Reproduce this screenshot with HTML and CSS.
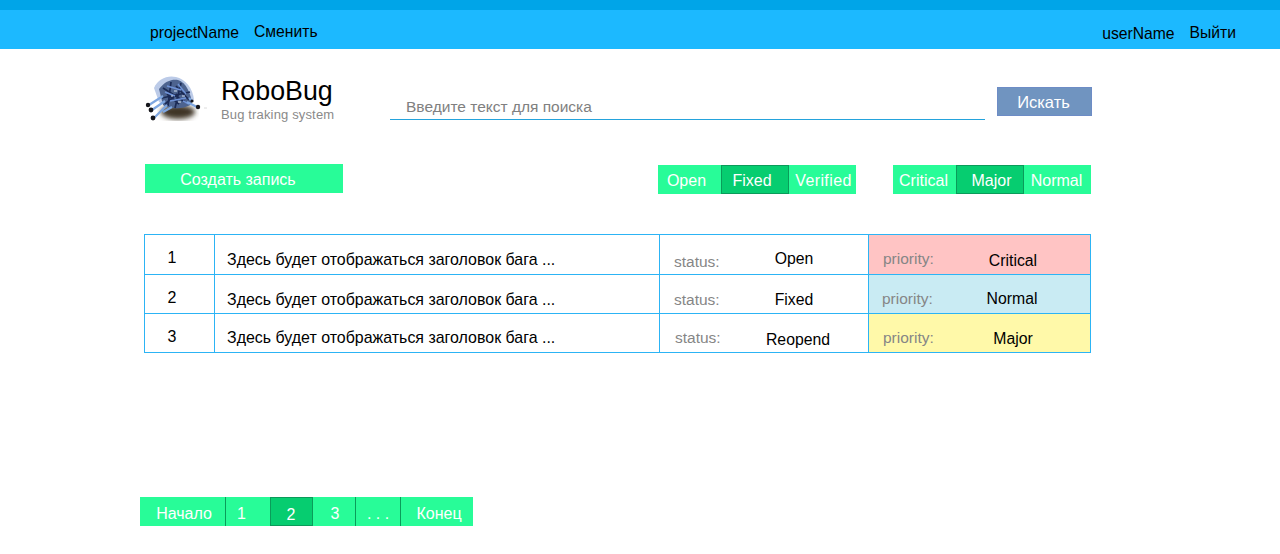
FILE: index.html
```html
<!DOCTYPE html>
<html lang="ru">
<head>
<meta charset="utf-8">
<title>RoboBug</title>
<link rel="stylesheet" href="styles.css">
</head>
<body>
<header class="topbar">
  <div class="topbar-left"><a class="name">projectName</a><a class="link">Сменить</a></div>
  <div class="topbar-right"><a class="name">userName</a><a class="link">Выйти</a></div>
</header>

<section class="masthead">
  <svg class="logo" width="66" height="52" viewBox="0 0 66 52" aria-hidden="true">
    <defs>
      <filter id="soft"><feGaussianBlur stdDeviation="0.5"/></filter>
      <filter id="shade"><feGaussianBlur stdDeviation="2.6"/></filter>
    </defs>
    <ellipse cx="33" cy="38" rx="17" ry="7" fill="#3f3627" filter="url(#shade)"/>
    <g filter="url(#soft)">
      <path d="M9 14 C13 5 22 1 31 3 C40 5 48 14 49 26 C44 32 20 32 14 28 Z" fill="#bccbe8"/>
      <path d="M14 15 C20 7 27 5 33 6 C41 8 46 20 47 30 C40 35 24 36 18 31 Z" fill="#4d648f"/>
      <path d="M18 14 L40 28 M26 8 L23 32 M36 9 L30 34 M17 24 L45 18 M22 20 L34 30 M31 12 L44 26 M20 30 L32 20" stroke="#1b2a55" stroke-width="1.7" fill="none"/>
      <path d="M22 12 L36 16 M25 27 L41 24 M33 10 L41 20 M20 18 L30 22 M38 27 L44 30" stroke="#6f93d8" stroke-width="1.4" fill="none"/>
      <path d="M29 17 h3 M37 22 h3 M26 22 h2 M33 28 h3" stroke="#d7e2f2" stroke-width="1" fill="none"/>
      <path d="M18 22 L4 31 M20 27 L7 36 M22 31 L9 44 M27 33 L18 38 M42 28 L52 33 M44 24 L47 27" stroke="#7ea6e0" stroke-width="2.2" fill="none"/>
    </g>
    <circle cx="3" cy="31" r="2.2" fill="#15151a"/>
    <circle cx="6" cy="36" r="2.4" fill="#15151a"/>
    <circle cx="8" cy="44" r="2.4" fill="#15151a"/>
    <circle cx="47" cy="27" r="1.6" fill="#15151a"/>
    <circle cx="53" cy="33" r="2.2" fill="#15151a"/>
    <path d="M59 34 h3" stroke="#dcdcdc" stroke-width="1"/>
  </svg>
  <div class="brand">
    <div class="brand-name">RoboBug</div>
    <div class="brand-sub">Bug traking system</div>
  </div>
  <input class="search" type="text" placeholder="Введите текст для поиска">
  <button class="search-btn" type="button">Искать</button>
</section>

<section class="toolbar">
  <a class="create">Создать запись</a>
  <div class="seg seg-status">
    <a class="seg-open">Open</a><a class="seg-fixed is-active">Fixed</a><a class="seg-verified">Verified</a>
  </div>
  <div class="seg seg-priority">
    <a class="seg-critical">Critical</a><a class="seg-major is-active">Major</a><a class="seg-normal">Normal</a>
  </div>
</section>

<section class="bugs">
  <div class="bug bug-1">
    <div class="cell num"><span class="p14">1</span></div>
    <div class="cell title"><span class="p16">Здесь будет отображаться заголовок бага ...</span></div>
    <div class="cell status"><span class="label p18">status:</span><span class="value p15">Open</span></div>
    <div class="cell priority critical"><span class="label p15">priority:</span><span class="value p17">Critical</span></div>
  </div>
  <div class="bug bug-2">
    <div class="cell num"><span class="p14">2</span></div>
    <div class="cell title"><span class="p16">Здесь будет отображаться заголовок бага ...</span></div>
    <div class="cell status"><span class="label p16">status:</span><span class="value p16">Fixed</span></div>
    <div class="cell priority normal"><span class="label p15 nudge-left">priority:</span><span class="value p15 shift-left">Normal</span></div>
  </div>
  <div class="bug bug-3">
    <div class="cell num"><span class="p14">3</span></div>
    <div class="cell title"><span class="p15">Здесь будет отображаться заголовок бага ...</span></div>
    <div class="cell status"><span class="label p15 nudge-right">status:</span><span class="value p17 wide">Reopend</span></div>
    <div class="cell priority major"><span class="label p15">priority:</span><span class="value p16">Major</span></div>
  </div>
</section>

<nav class="pager">
  <a class="pg-first">Начало</a><a class="pg-1">1</a><a class="pg-2 is-active">2</a><a class="pg-3">3</a><a class="pg-more">. . .</a><a class="pg-last">Конец</a>
</nav>
</body>
</html>
```
FILE: styles.css
```css
* { box-sizing: border-box; }
html, body { margin: 0; padding: 0; }
body {
  width: 1280px;
  height: 554px;
  overflow: hidden;
  background: #fff;
  color: #000;
  font: 16px/18px "Liberation Sans", Arial, sans-serif;
}

/* top bar */
.topbar {
  height: 49px;
  padding: 10px 44px 0 150px;
  background: linear-gradient(#00a5e8 10px, #1cb9ff 10px);
  display: flex;
  justify-content: space-between;
  font-size: 15.7px;
}
.topbar-left, .topbar-right { display: flex; }
.topbar .name { padding-top: 14px; margin-right: 15px; }
.topbar .link { padding-top: 13px; }
.topbar-right .name { padding-top: 15px; }
.topbar-right .link { padding-top: 14px; }

/* logo and search */
.masthead {
  height: 115px;
  padding: 25px 0 0 145px;
  display: flex;
  align-items: flex-start;
}
.logo { flex: none; margin-right: 10px; }
.brand { width: 169px; padding-top: 2px; }
.brand-name { font-size: 26.8px; line-height: 30px; }
.brand-sub { font-size: 13px; line-height: 14px; margin-top: 2px; letter-spacing: .15px; color: #8a8a8a; }
.search {
  width: 595px;
  height: 28px;
  margin: 18px 12px 0 0;
  padding: 2px 16px 0;
  border: 0;
  border-bottom: 1px solid #24a3dc;
  outline: 0;
  background: transparent;
  font: 15.5px/18px "Liberation Sans", Arial, sans-serif;
}
.search::placeholder { color: #808080; opacity: 1; }
.search-btn {
  width: 95px;
  height: 29px;
  margin-top: 13px;
  padding: 0 2px 0 0;
  border: 1px solid #6d8cc6;
  background: #7094c0;
  color: #fff;
  font: 16.5px/18px "Liberation Sans", Arial, sans-serif;
}

/* filters */
.toolbar { height: 70px; padding-left: 145px; display: flex; align-items: flex-start; color: #fff; }
.toolbar a { color: #fff; }
.create {
  width: 198px;
  height: 29px;
  padding-right: 12px;
  background: #28fc98;
  text-align: center;
  line-height: 31px;
  margin-right: 315px;
}
.seg { display: flex; height: 29px; margin-top: 1px; background: #28fc98; }
.seg-status { width: 198px; margin-right: 37px; }
.seg-priority { width: 198px; }
.seg a { line-height: 31px; text-align: center; }
.is-active { background: #06cd70; border: 1px solid #0a9c5a; }
.seg .is-active { line-height: 29px; }
.seg-open { width: 63px; padding-right: 6px; }
.seg-fixed { width: 68px; padding-right: 6px; }
.seg-verified { width: 67px; padding-left: 2px; letter-spacing: .4px; }
.seg-critical { width: 63px; padding-right: 2px; }
.seg-major { width: 68px; padding-left: 3px; }
.seg-normal { width: 67px; padding-right: 2px; }

/* bug list */
.bugs {
  width: 947px;
  height: 119px;
  margin-left: 144px;
  border: 1px solid #2cb4f5;
  border-bottom: 0;
}
.bug {
  display: grid;
  grid-template-columns: 70px 445px 209px 221px;
  height: 39px;
  border-bottom: 1px solid #2cb4f5;
}
.bug-1 { height: 40px; }
.cell { display: flex; align-items: flex-start; border-right: 1px solid #2cb4f5; }
.cell:last-child { border-right: 0; }
.num { justify-content: center; padding-right: 15px; }
.title { padding-left: 12px; font-size: 15.96px; }
.label { width: 60px; font-size: 15.5px; color: #868686; }
.value { text-align: center; font-size: 15.8px; }
.status { padding-left: 14px; }
.status .value { width: 120px; }
.status .value.wide { width: 126px; }
.priority { padding-left: 14px; }
.priority .value { width: 140px; }
.priority .value.shift-left { width: 138px; }
.nudge-left { margin-left: -1px; margin-right: 1px; }
.nudge-right { margin-left: 1px; }
.critical { background: #ffc4c4; }
.normal { background: #c9ebf3; }
.major { background: #fff9a9; }
.p14 { padding-top: 14px; }
.p15 { padding-top: 15px; }
.p16 { padding-top: 16px; }
.p17 { padding-top: 17px; }
.p18 { padding-top: 18px; }

/* pager */
.pager {
  display: flex;
  width: 333px;
  height: 29px;
  margin: 144px 0 0 140px;
  background: #28fc98;
}
.pager a { color: #fff; text-align: center; border-right: 1px solid #0a9c5a; }
.pager a:last-child { border-right: 0; }
.pager .pg-first { width: 86px; padding-left: 3px; line-height: 33px; }
.pager .pg-1 { width: 44px; padding-right: 13px; line-height: 34px; border-right: 0; }
.pager .pg-2 { width: 43px; padding-right: 1px; line-height: 33px; border: 1px solid #0a9c5a; }
.pager .pg-3 { width: 43px; padding-left: 2px; line-height: 34px; }
.pager .pg-more { width: 45px; line-height: 33px; }
.pager .pg-last { width: 72px; padding-left: 4px; line-height: 33px; }
```
